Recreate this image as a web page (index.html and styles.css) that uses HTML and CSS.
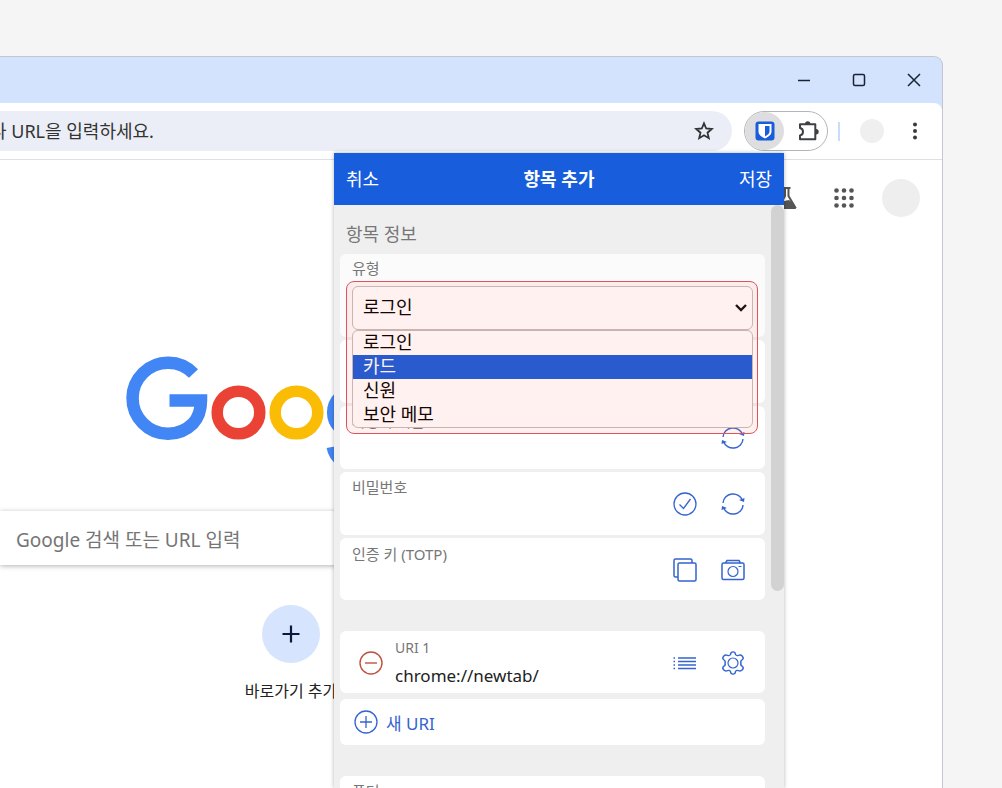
FILE: index.html
```html
<!DOCTYPE html>
<html lang="ko">
<head>
<meta charset="utf-8">
<meta name="viewport" content="width=device-width, initial-scale=1">
<title>항목 추가</title>
<link rel="stylesheet" href="styles.css">
</head>
<body>
<svg class="defs" aria-hidden="true">
  <symbol id="refresh" viewBox="0 0 24 24">
    <path d="M2 11A10 9.500 0 0 1 21.500 8.500M22 13A10 9.500 0 0 1 2.500 15.500" fill="none" stroke="currentColor" stroke-width="1.400"/>
    <path d="M18 8l5.500-2-.5 4zM6 16l-5.500 2 .5-4z" fill="currentColor"/>
  </symbol>
</svg>
<div class="window">
  <header class="titlebar">
    <button class="win-btn" aria-label="최소화"><svg width="14" height="14" viewBox="0 0 14 14"><path d="M1 7.500h12"/></svg></button>
    <button class="win-btn" aria-label="최대화"><svg width="14" height="14" viewBox="0 0 14 14"><rect x="1.500" y="1.500" width="11" height="11" rx="1.500"/></svg></button>
    <button class="win-btn" aria-label="닫기"><svg width="14" height="14" viewBox="0 0 14 14"><path d="M1 1l12 12M13 1L1 13"/></svg></button>
  </header>

  <div class="chrome">
    <div class="toolbar">
      <div class="omnibox">
        <input class="omnibox-input" aria-label="주소창" value="나 URL을 입력하세요.">
        <button class="icon-btn" aria-label="북마크"><svg width="20" height="20" viewBox="0 0 20 20"><path d="M10 2.300l2.200 5.200 5.600.5-4.300 3.700 1.300 5.500-4.800-2.900-4.800 2.900 1.300-5.500L2.200 8l5.600-.5z" fill="none" stroke="#333" stroke-width="1.800"/></svg></button>
      </div>
      <div class="extensions">
        <button class="ext ext-active" aria-label="Bitwarden"><svg width="20" height="20" viewBox="0 0 20 20"><rect x=".5" y=".5" width="19" height="19" rx="3" fill="#175ddc"/><path d="M3.500 3h13v7.500c0 3.500-3.500 5.600-6.500 7-3-1.400-6.500-3.500-6.500-7z" fill="#fff"/><path d="M10 5h4.500v5.500c0 2-2 3.500-4.500 4.900z" fill="#175ddc"/></svg></button>
        <button class="ext ext-all" aria-label="확장 프로그램"><svg width="22" height="22" viewBox="0 0 22 22"><path d="M3 4.300h15.300v15H3V15.500c4-.8 4-6.600 0-7.400z" fill="none" stroke="#3f4043" stroke-width="2" stroke-linejoin="round"/><path d="M8 4a2.700 2.700 0 0 1 5.400 0zM19 9a2.700 2.700 0 0 1 0 5.400z" fill="#3f4043"/></svg></button>
      </div>
      <span class="divider"></span>
      <button class="profile" aria-label="프로필"></button>
      <button class="menu-btn" aria-label="메뉴"><svg width="6" height="18" viewBox="0 0 6 18" fill="#3a3a3a"><circle cx="3" cy="2.500" r="2"/><circle cx="3" cy="9" r="2"/><circle cx="3" cy="15.500" r="2"/></svg></button>
    </div>

    <main class="newtab">
      <div class="newtab-bar">
        <svg width="24" height="24" viewBox="0 0 24 24"><path d="M7 2h8.500M10 2v8L4 21h16l-6.500-11V2" fill="none" stroke="#555" stroke-width="2"/><path d="M6.500 15.500L14 14l5 4 2 5h-18z" fill="#555"/></svg>
        <svg class="apps" width="20" height="20" viewBox="0 0 20 20"><circle cx="2.500" cy="2.500" r="2.300"/><circle cx="10" cy="2.500" r="2.300"/><circle cx="17.500" cy="2.500" r="2.300"/><circle cx="2.500" cy="10" r="2.300"/><circle cx="10" cy="10" r="2.300"/><circle cx="17.500" cy="10" r="2.300"/><circle cx="2.500" cy="17.500" r="2.300"/><circle cx="10" cy="17.500" r="2.300"/><circle cx="17.500" cy="17.500" r="2.300"/></svg>
        <button class="account" aria-label="계정"></button>
      </div>
      <div class="newtab-center">
        <svg class="logo" width="326" height="112" viewBox="0 0 326 112" fill="none" role="img" aria-label="Google">
          <path d="M66.500 17.500A35.500 35.500 0 1 0 66 67.500C71.500 61.500 74 55 74 44.500H42.500" transform="translate(-1 -1)" stroke="#4285f4" stroke-width="12.500"/>
          <circle cx="110.500" cy="55.500" r="21.300" stroke="#ea4335" stroke-width="11.500"/>
          <circle cx="168.500" cy="55.500" r="21.300" stroke="#fbbc05" stroke-width="11.500"/>
          <circle cx="226" cy="55.500" r="21.300" stroke="#4285f4" stroke-width="11.500"/>
          <path d="M248 32v50a21 21 0 0 1-44 8" stroke="#4285f4" stroke-width="11"/>
          <path d="M270 0v82" stroke="#34a853" stroke-width="11"/>
          <circle cx="302" cy="55.500" r="21" stroke="#ea4335" stroke-width="11"/>
        </svg>
        <input class="search" aria-label="검색" placeholder="Google 검색 또는 URL 입력">
        <button class="shortcut">
          <span class="shortcut-icon"><svg width="18" height="18" viewBox="0 0 18 18"><path d="M9 0.500v17M.5 9h17" stroke="#0b1a3c" stroke-width="2.200"/></svg></span>
          바로가기 추가
        </button>
      </div>
    </main>
  </div>

  <section class="popup">
    <header class="popup-header">
      <button class="popup-action">취소</button>
      <h1 class="popup-title">항목 추가</h1>
      <button class="popup-action popup-save">저장</button>
    </header>
    <div class="popup-body">
      <form class="form">
        <h2 class="section-title">항목 정보</h2>
        <div class="card card-type">
          <label class="label" for="type">유형</label>
          <div class="picker">
            <select class="select" id="type">
              <option>로그인</option><option>카드</option><option>신원</option><option>보안 메모</option>
            </select>
            <svg class="chevron" width="14" height="10" viewBox="0 0 14 10"><path d="M2 2l5 5 5-5" fill="none" stroke="#111" stroke-width="2.400"/></svg>
            <ul class="options" role="listbox" aria-label="유형">
              <li class="option" role="option">로그인</li>
              <li class="option option-active" role="option" aria-selected="true">카드</li>
              <li class="option" role="option">신원</li>
              <li class="option" role="option">보안 메모</li>
            </ul>
            <div class="highlight"></div>
          </div>
        </div>
        <div class="card">
          <input class="value" aria-label="이름">
        </div>
        <div class="card">
          <div class="field"><label class="label" for="user">사용자 이름</label><input class="value" id="user"></div>
          <button type="button" class="tool" aria-label="사용자 이름 생성"><svg width="24" height="24"><use href="#refresh"/></svg></button>
        </div>
        <div class="card">
          <div class="field"><label class="label" for="pass">비밀번호</label><input class="value" id="pass" type="password"></div>
          <button type="button" class="tool" aria-label="비밀번호 확인"><svg width="24" height="24" viewBox="0 0 24 24" fill="none" stroke="currentColor" stroke-width="1.300"><circle cx="12" cy="12" r="11"/><path d="M6.500 12.500l4 4 7-9.500"/></svg></button>
          <button type="button" class="tool" aria-label="비밀번호 생성"><svg width="24" height="24"><use href="#refresh"/></svg></button>
        </div>
        <div class="card card-short">
          <div class="field"><label class="label" for="totp">인증 키 (TOTP)</label><input class="value" id="totp"></div>
          <button type="button" class="tool" aria-label="복사"><svg width="24" height="24" viewBox="0 0 24 24" fill="none" stroke="currentColor" stroke-width="1.500"><rect x="5" y="5" width="18" height="18" rx="1.500"/><path d="M5 19H2.500A1.500 1.500 0 0 1 1 17.500v-15A1.500 1.500 0 0 1 2.500 1h15A1.500 1.500 0 0 1 19 2.500V5"/></svg></button>
          <button type="button" class="tool" aria-label="QR 촬영"><svg width="24" height="24" viewBox="0 0 24 24" fill="none" stroke="currentColor" stroke-width="1.500"><rect x="1" y="5" width="22" height="16.500" rx="1.500"/><path d="M4.500 5l1.500-2.500h12L19.500 5"/><circle cx="12" cy="13.500" r="5" stroke-width="1.200"/><path d="M17.500 8.500h3" stroke-width="1"/></svg></button>
        </div>
        <div class="card card-short card-uri">
          <button type="button" class="remove" aria-label="삭제"><svg width="24" height="24" viewBox="0 0 24 24" fill="none" stroke="currentColor" stroke-width="1.400"><circle cx="12" cy="12" r="11"/><path d="M6 12h12"/></svg></button>
          <div class="field"><label class="label" for="uri">URI 1</label><input class="value" id="uri" value="chrome://newtab/"></div>
          <button type="button" class="tool" aria-label="목록"><svg width="24" height="24" viewBox="0 0 24 24" fill="none" stroke="currentColor" stroke-width="1.400"><path d="M5 7h18M5 10.500h18M5 14h18M5 17.500h18"/><path d="M.5 7h1.500M.5 10.500h1.500M.5 14h1.500M.5 17.500h1.500"/></svg></button>
          <button type="button" class="tool" aria-label="설정"><svg width="24" height="24" viewBox="0 0 24 24" fill="none" stroke="currentColor" stroke-width="1.400" stroke-linejoin="round"><path d="M9.500 3.500C9.800 0 14.200 0 14.500 3.500Q15.500 5.200 17.500 4.300C20.500 3 23.500 6.500 21.500 8.500Q19 10 20 12 19 14 21.500 15.500C23.500 17.500 20.500 21 17.500 19.700Q15.500 18.800 14.500 20.500C14.200 24 9.800 24 9.500 20.500Q8.500 18.800 6.500 19.700C3.500 21 .5 17.500 2.500 15.500Q5 14 4 12 5 10 2.500 8.500C.5 6.500 3.500 3 6.500 4.300Q8.500 5.200 9.500 3.500z"/><circle cx="12" cy="12" r="5" stroke-width="1.200"/></svg></button>
        </div>
        <button type="button" class="card add-uri"><svg width="24" height="24" viewBox="0 0 24 24" fill="none" stroke="currentColor" stroke-width="1.300"><circle cx="12" cy="12" r="11"/><path d="M6 12h12M12 6v12"/></svg>새 URI</button>
        <div class="card card-folder">
          <div class="field"><label class="label" for="folder">폴더</label><input class="value" id="folder"></div>
        </div>
      </form>
      <div class="scroll-thumb"></div>
    </div>
  </section>
</div>
</body>
</html>
```

FILE: styles.css
```css
* { box-sizing: border-box; }

body {
  margin: 0;
  height: 100vh;
  overflow: hidden;
  padding: 56px 59px 0 0;
  background: #f5f5f5;
  color: #222;
  font-family: "Noto Sans", "Noto Sans CJK KR", sans-serif;
  font-size: 17px;
}

button, input, select {
  font: inherit;
  color: inherit;
  border: 0;
  padding: 0;
  margin: 0;
  background: none;
}

svg { display: block; flex: none; }
.defs { display: none; }

.window {
  position: relative;
  display: flex;
  flex-direction: column;
  height: 100%;
  border: 1px solid #c3c7d0;
  border-width: 1px 1px 0 0;
  border-radius: 0 9px 0 0;
  background: #d3e3fd;
}

.titlebar {
  display: flex;
  justify-content: flex-end;
  height: 46px;
  padding-right: 1px;
}

.win-btn {
  display: grid;
  place-items: center;
  width: 55px;
}

.win-btn svg {
  fill: none;
  stroke: #1b2333;
  stroke-width: 1.5;
}

.chrome {
  flex: 1;
  display: flex;
  flex-direction: column;
  min-height: 0;
  overflow: hidden;
  border-radius: 0 8px 0 0;
  background: #fff;
}

.toolbar {
  display: flex;
  align-items: center;
  height: 57px;
  padding: 0 20px 0 0;
  border-bottom: 1px solid #dedfe2;
}

.omnibox {
  flex: 1;
  display: flex;
  align-items: center;
  height: 40px;
  margin: 0 12px 0 -10px;
  padding: 0 18px 0 0;
  border-radius: 0 20px 20px 0;
  background: #ebeef6;
}

.omnibox-input {
  flex: 1;
  min-width: 0;
  height: 40px;
  padding-bottom: 2px;
  color: #333;
  font-size: 18px;
}

.extensions {
  display: flex;
  height: 40px;
  border: 1px solid #b5b5b5;
  border-radius: 20px;
}

.ext {
  display: grid;
  place-items: center;
}

.ext-active {
  width: 39px;
  border-radius: 50%;
  background: #dedddf;
}

.ext-all { width: 43px; padding-left: 4px; }

.divider {
  width: 2px;
  height: 19px;
  margin: 0 20px 0 10px;
  background: #c9dcfb;
}

.profile {
  width: 24px;
  height: 24px;
  margin-right: 24px;
  border-radius: 50%;
  background: #efefef;
}

.menu-btn { padding: 4px; }

.newtab { flex: 1; min-height: 0; }

.newtab-bar {
  display: flex;
  align-items: center;
  justify-content: flex-end;
  padding: 19px 22px 0 0;
}

.apps { margin: 0 28px 0 35px; fill: #555; }

.account {
  width: 38px;
  height: 38px;
  border-radius: 50%;
  background: #eee;
}

.newtab-center {
  display: flex;
  flex-direction: column;
  align-items: center;
  width: 582px;
  padding-top: 140px;
}

.logo { overflow: visible; }

.search {
  width: 100%;
  height: 54px;
  margin: 42px 0 40px;
  padding: 4px 16px 0;
  font-size: 19px;
  box-shadow: 0 1px 5px rgba(0, 0, 0, .3);
}

.search::placeholder { color: #757575; opacity: 1; }

.shortcut {
  display: flex;
  flex-direction: column;
  align-items: center;
  gap: 16px;
  font-size: 16px;
  line-height: 24px;
}

.shortcut-icon {
  display: grid;
  place-items: center;
  width: 58px;
  height: 58px;
  border-radius: 50%;
  background: #d6e4fd;
}

.popup {
  position: absolute;
  top: 96px;
  right: 158px;
  bottom: 0;
  display: flex;
  flex-direction: column;
  width: 450px;
  overflow: hidden;
  background: #efefef;
  box-shadow: 0 0 4px rgba(0, 0, 0, .3);
}

.popup-header {
  display: grid;
  grid-template-columns: 1fr auto 1fr;
  align-items: center;
  flex: none;
  height: 52px;
  padding: 0 12px 3px;
  background: #175ddc;
  color: #fff;
  font-size: 18px;
}

.popup-action { justify-self: start; }
.popup-save { justify-self: end; }
.popup-title { margin: 0; font-size: 18px; font-weight: 700; }

.popup-body {
  flex: 1;
  display: flex;
  align-items: flex-start;
  min-height: 0;
}

.form {
  flex: 1;
  display: flex;
  flex-direction: column;
  gap: 3px;
  padding: 0 6px;
}

.scroll-thumb {
  width: 13px;
  height: 386px;
  border-radius: 7px;
  background: #d2d2d2;
}

.section-title {
  margin: 15px 0 3px;
  padding-left: 6px;
  color: #777;
  font-size: 18px;
  font-weight: 400;
  line-height: 28px;
}

.card {
  display: flex;
  align-items: center;
  gap: 24px;
  min-height: 63px;
  padding: 4px 20px 4px 12px;
  border-radius: 6px;
  background: #fff;
}

.card-short { min-height: 62px; padding-top: 5px; padding-bottom: 3px; }

.card-type {
  flex-direction: column;
  align-items: stretch;
  gap: 7px;
  min-height: 83px;
  padding: 3px 12px;
  background: #fbfbfb;
}

.field {
  flex: 1;
  align-self: flex-start;
  display: flex;
  flex-direction: column;
  min-width: 0;
}

.label {
  color: #777;
  font-size: 15px;
  line-height: 22px;
}

.card-uri .label { font-size: 14px; line-height: 24px; }
.value { height: 30px; line-height: 24px; outline: 0; }

.tool { color: #3464cf; }
.card-uri { margin-top: 28px; padding-left: 19px; }
.card-uri .field { margin-left: -12px; }
.remove { color: #c0513f; }

.add-uri {
  gap: 8px;
  min-height: 46px;
  margin-top: 3px;
  padding: 0 14px;
  color: #3464cf;
}

.card-folder { margin-top: 28px; }

.picker { position: relative; }

.select {
  display: block;
  width: 100%;
  height: 44px;
  padding: 0 10px 3px;
  border: 1px solid #c5bdbd;
  border-radius: 6px;
  background: #fff;
  color: #000;
  font-size: 18px;
  appearance: none;
}

.chevron {
  position: absolute;
  top: 17px;
  right: 5px;
  pointer-events: none;
}

.options {
  position: absolute;
  top: 44px;
  left: 0;
  right: 0;
  z-index: 1;
  margin: 0;
  padding: 0;
  overflow: hidden;
  border: 1px solid #c5bdbd;
  border-radius: 6px;
  background: #fff;
  color: #000;
  font-size: 18px;
  list-style: none;
}

.option { height: 24px; padding: 0 10px; line-height: 22px; }
.option-active { background: #175ddc; color: #fff; }

.highlight {
  position: absolute;
  z-index: 2;
  top: -5px;
  left: -6px;
  right: -5px;
  height: 153px;
  border: 1px solid #e2525a;
  border-radius: 8px;
  background: rgba(255, 80, 50, .08);
  pointer-events: none;
}
```
